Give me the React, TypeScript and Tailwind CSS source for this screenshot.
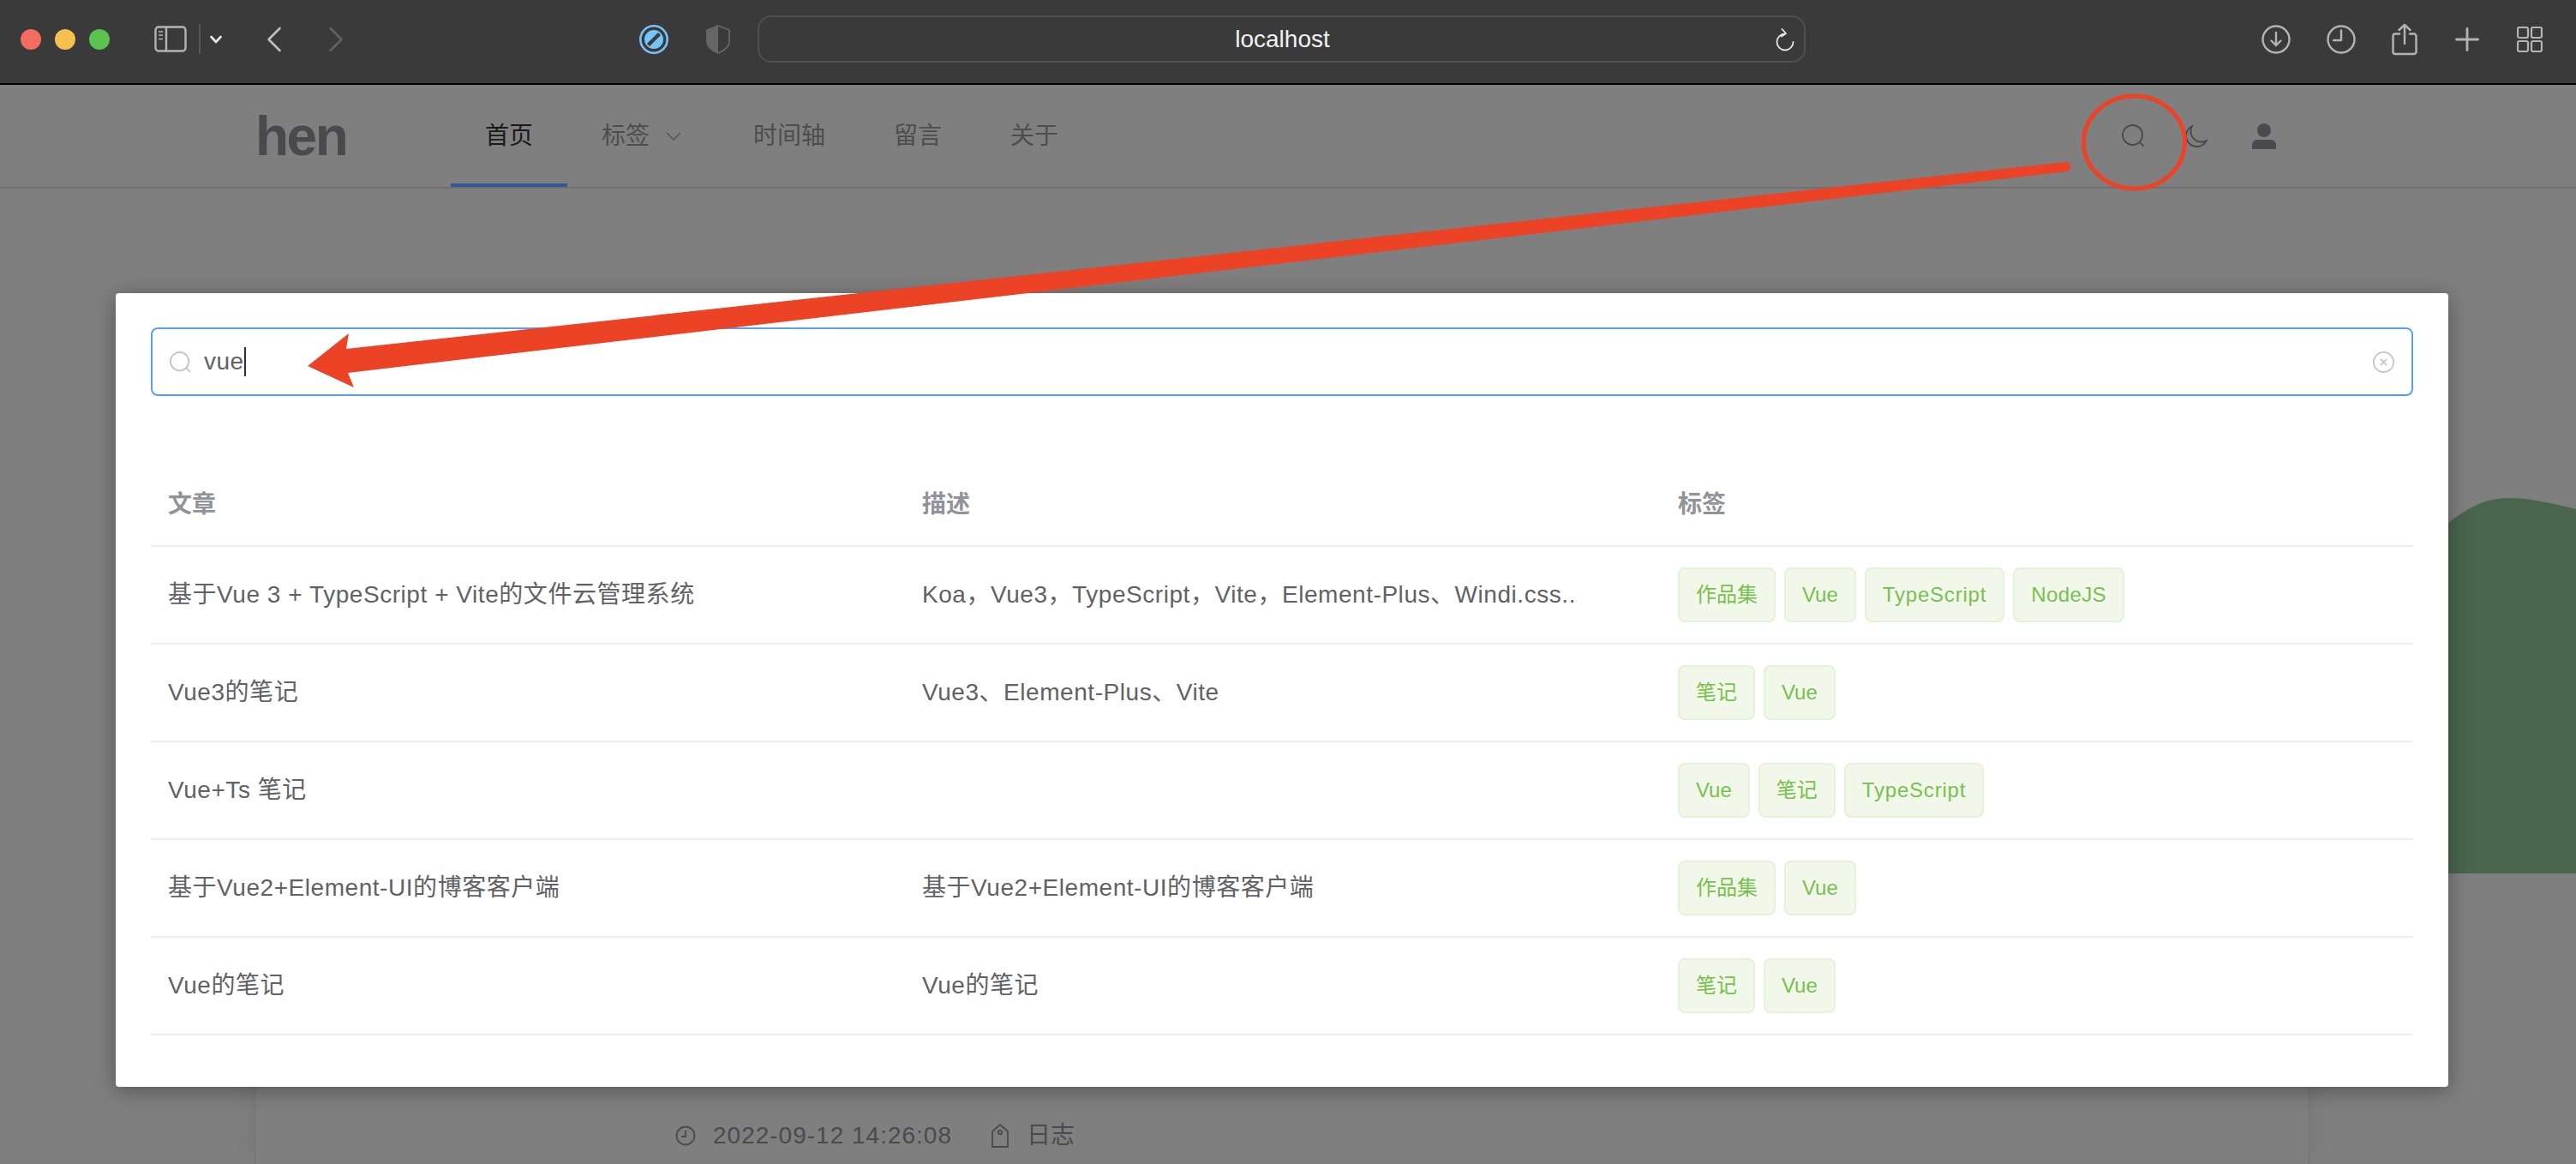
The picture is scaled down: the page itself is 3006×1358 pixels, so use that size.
const rows = [
  {
    title: "基于Vue 3 + TypeScript + Vite的文件云管理系统",
    desc: "Koa，Vue3，TypeScript，Vite，Element-Plus、Windi.css..",
    tags: ["作品集", "Vue", "TypeScript", "NodeJS"],
  },
  { title: "Vue3的笔记", desc: "Vue3、Element-Plus、Vite", tags: ["笔记", "Vue"] },
  { title: "Vue+Ts 笔记", desc: "", tags: ["Vue", "笔记", "TypeScript"] },
  {
    title: "基于Vue2+Element-UI的博客客户端",
    desc: "基于Vue2+Element-UI的博客客户端",
    tags: ["作品集", "Vue"],
  },
  { title: "Vue的笔记", desc: "Vue的笔记", tags: ["笔记", "Vue"] },
];

function SearchIcon({ className }: { className: string }) {
  return (
    <svg viewBox="64 64 896 896" className={className} fill="currentColor">
      <path d="m795.904 750.72 124.992 124.928a32 32 0 0 1-45.248 45.248L750.656 795.904a416 416 0 1 1 45.248-45.248zM480 832a352 352 0 1 0 0-704 352 352 0 0 0 0 704z" />
    </svg>
  );
}

function BrowserBar() {
  return (
    <div className="flex h-[99px] shrink-0 items-center border-b-2 border-black bg-[#3a3a3a] pb-[6px] pl-[24px] text-[#b4b4b4]">
      <div className="flex gap-[16px]">
        <div className="h-[24px] w-[24px] rounded-full bg-[#f26d60]" />
        <div className="h-[24px] w-[24px] rounded-full bg-[#f6c04e]" />
        <div className="h-[24px] w-[24px] rounded-full bg-[#5ac350]" />
      </div>
      <svg viewBox="0 0 38 31" className="ml-[52px] h-[31px] w-[38px]" fill="none" stroke="currentColor" strokeWidth="2.4">
        <rect x="1.5" y="1.5" width="35" height="28" rx="3.5" />
        <path d="M14 1.5v28" />
        <path d="M5 7h5M5 11h5M5 15.500h5" strokeWidth="1.6" />
      </svg>
      <div className="ml-[14px] h-[35px] w-[2px] bg-[#555555]" />
      <svg viewBox="0 0 14 10" className="ml-[11px] h-[10px] w-[14px]" fill="none" stroke="#e8e8e8" strokeWidth="2.6" strokeLinecap="round" strokeLinejoin="round">
        <path d="M1.500 2 7 8l5.500-6" />
      </svg>
      <svg viewBox="0 0 18 30" className="ml-[52px] h-[30px] w-[18px]" fill="none" stroke="#bdbdbd" strokeWidth="2.6" strokeLinecap="round" strokeLinejoin="round">
        <path d="M15.500 2 2.500 15l13 13" />
      </svg>
      <svg viewBox="0 0 18 30" className="ml-[54px] h-[30px] w-[18px]" fill="none" stroke="#616161" strokeWidth="2.6" strokeLinecap="round" strokeLinejoin="round">
        <path d="m2.500 2 13 13-13 13" />
      </svg>
      <svg viewBox="0 0 34 34" className="ml-[345px] h-[34px] w-[34px]">
        <circle cx="17" cy="17" r="15.700" fill="none" stroke="#74c4fb" strokeWidth="2.600" />
        <circle cx="17" cy="17" r="11" fill="#74c4fb" />
        <path d="M10.500 23.500 23.500 10.500" stroke="#3a3a3a" strokeWidth="4.400" />
      </svg>
      <svg viewBox="0 0 28 34" className="ml-[44px] h-[34px] w-[28px]">
        <path d="M14 1 27 6v14c0 6-6 10-13 13C7 30 1 26 1 20V6z" fill="none" stroke="#666666" strokeWidth="1.800" />
        <path d="M14 1 1 6v14c0 6 6 10 13 13z" fill="#666666" />
      </svg>
      <div className="relative ml-[32px] flex h-[55px] w-[1223px] items-center justify-center rounded-[16px] border-2 border-[#4f4f4f] pt-[1px]">
        <span className="ml-[2px] text-[28px] leading-none text-[#f2f2f2]">localhost</span>
        <svg viewBox="0 0 22 28" className="absolute right-[11px] top-[12px] h-[28px] w-[22px]" fill="none" stroke="#e6e6e6" strokeWidth="1.800" strokeLinecap="round" strokeLinejoin="round">
          <path d="M11 7.500a9.500 9.500 0 1 0 9.500 9.500" />
          <path d="M7.500 2 12 7l-5 3.500" />
        </svg>
      </div>
      <svg viewBox="0 0 34 34" className="ml-[532px] h-[34px] w-[34px]" fill="none" stroke="currentColor" strokeWidth="2.400" strokeLinecap="round" strokeLinejoin="round">
        <circle cx="17" cy="17" r="15.500" />
        <path d="M17 9v15M11.500 18.500 17 24l5.500-5.500" />
      </svg>
      <svg viewBox="0 0 34 34" className="ml-[42px] h-[34px] w-[34px]" fill="none" stroke="currentColor" strokeWidth="2.400" strokeLinecap="round" strokeLinejoin="round">
        <circle cx="17" cy="17" r="15.500" />
        <path d="M17 6.500V18H8" />
      </svg>
      <svg viewBox="0 0 30 38" className="ml-[42px] h-[38px] w-[30px]" fill="none" stroke="currentColor" strokeWidth="2.400" strokeLinecap="round" strokeLinejoin="round">
        <path d="M9 12.500H4A2.500 2.500 0 0 0 1.500 15v18.500A2.500 2.500 0 0 0 4 36h22a2.500 2.500 0 0 0 2.500-2.500V15a2.500 2.500 0 0 0-2.500-2.500h-5" />
        <path d="M15 24V2M8.500 8 15 2l6.500 6" />
      </svg>
      <svg viewBox="0 0 28 28" className="ml-[44px] h-[28px] w-[28px]" fill="none" stroke="currentColor" strokeWidth="2.800" strokeLinecap="round">
        <path d="M14 1.500v25M1.500 14h25" />
      </svg>
      <svg viewBox="0 0 30 30" className="ml-[44px] h-[30px] w-[30px]" fill="none" stroke="currentColor" strokeWidth="2.200">
        <rect x="1" y="1" width="12" height="12" rx="2" />
        <rect x="17" y="1" width="12" height="12" rx="2" />
        <rect x="1" y="17" width="12" height="12" rx="2" />
        <rect x="17" y="17" width="12" height="12" rx="2" />
      </svg>
    </div>
  );
}

function SiteNav() {
  return (
    <div className="flex h-[121px] shrink-0 items-center border-b-2 border-[#707070] pl-[298px] pr-[350px] text-[28px] text-[#4d4d4d]">
      <span className="w-[228px] text-[64px] font-bold leading-none tracking-[-2.5px] text-[#4a4a4e]">hen</span>
      <div className="flex h-full">
        <div className="flex items-center px-[40px] text-[#1a1a1a] shadow-[inset_0_-4px_0_#2f5a93]">首页</div>
        <div className="flex items-center pl-[40px] pr-[44px]">
          标签
          <svg viewBox="0 0 18 10" className="ml-[19px] h-[10px] w-[18px]" fill="none" stroke="#555555" strokeWidth="1.500">
            <path d="m1 1 8 8 8-8" />
          </svg>
        </div>
        <div className="flex items-center px-[40px]">时间轴</div>
        <div className="flex items-center px-[40px]">留言</div>
        <div className="flex items-center px-[40px]">关于</div>
      </div>
      <div className="ml-auto flex items-center text-[#4a4a4e]">
        <SearchIcon className="h-[27px] w-[27px]" />
        <svg viewBox="64 64 896 896" className="ml-[47px] h-[27px] w-[27px]" fill="currentColor">
          <path d="M240.448 240.448a384 384 0 1 0 559.424 525.696 448 448 0 0 1-542.016-542.08 390.592 390.592 0 0 0-17.408 16.384zm181.056 362.048a384 384 0 0 0 525.632 16.384A448 448 0 1 1 405.056 76.800a384 384 0 0 0 16.448 525.696z" />
        </svg>
        <svg viewBox="0 0 28 30" className="ml-[51px] h-[30px] w-[28px]" fill="currentColor">
          <circle cx="14" cy="8" r="8" />
          <path d="M0 30v-5a6 6 0 0 1 6-6h16a6 6 0 0 1 6 6v5z" />
        </svg>
      </div>
    </div>
  );
}

function BackgroundCard() {
  return (
    <div className="ml-[297px] mt-[180px] flex w-[2398px] flex-1 flex-col justify-end border-x-2 border-[#77777f] pb-[16px] pl-[489px] text-[28px] leading-[34px] text-[#4a4a4e] shadow-[0_0_24px_rgba(0,0,0,0.08)]">
      <div className="flex items-center">
        <svg viewBox="0 0 24 24" className="h-[24px] w-[24px]" fill="none" stroke="currentColor" strokeWidth="1.800">
          <circle cx="12" cy="12" r="10.500" />
          <path d="M12 6v7H7" />
        </svg>
        <span className="ml-[20px] tracking-[1px]">2022-09-12 14:26:08</span>
        <svg viewBox="0 0 20 28" className="ml-[46px] h-[28px] w-[20px]" fill="none" stroke="currentColor" strokeWidth="1.800">
          <path d="M1 9 10 1l9 8v18H1z" />
          <circle cx="10" cy="10" r="2.200" />
        </svg>
        <span className="ml-[21px]">日志</span>
      </div>
    </div>
  );
}

function SearchDialog() {
  return (
    <div className="absolute left-[135px] top-[342px] h-[926px] w-[2722px] rounded-[4px] bg-white px-[41px] pt-[40px] shadow-[0_4px_24px_rgba(0,0,0,0.35)]">
      <div className="flex h-[80px] items-center rounded-[8px] border-2 border-[#5b9ef6] pl-[20px] pr-[20px] text-[#c0c4cc]">
        <SearchIcon className="h-[25px] w-[25px]" />
        <span className="ml-[15px] text-[28px] tracking-[0.5px] text-[#606266]">vue</span>
        <div className="h-[34px] w-[2px] bg-[#303133]" />
        <svg viewBox="64 64 896 896" className="ml-auto h-[25px] w-[25px]" fill="currentColor">
          <path d="m466.752 512-90.496-90.496a32 32 0 0 1 45.248-45.248L512 466.752l90.496-90.496a32 32 0 1 1 45.248 45.248L557.248 512l90.496 90.496a32 32 0 1 1-45.248 45.248L512 557.248l-90.496 90.496a32 32 0 0 1-45.248-45.248L466.752 512z" />
          <path d="M512 896a384 384 0 1 0 0-768 384 384 0 0 0 0 768zm0 64a448 448 0 1 1 0-896 448 448 0 0 1 0 896z" />
        </svg>
      </div>
      <div className="mt-[76px] grid h-[100px] grid-cols-3 items-center border-b-2 border-[#ebeef5] pt-[3px] text-[28px] font-bold text-[#909399]">
        <div className="px-[20px]">文章</div>
        <div className="px-[20px]">描述</div>
        <div className="pl-[22px]">标签</div>
      </div>
      {rows.map((row) => (
        <div key={row.title} className="grid h-[114px] grid-cols-3 items-center border-b-2 border-[#ebeef5] text-[28px] text-[#606266]">
          <div className="px-[20px] tracking-[0.55px]">{row.title}</div>
          <div className="px-[20px] tracking-[0.55px]">{row.desc}</div>
          <div className="flex gap-[10px] pl-[22px]">
            {row.tags.map((tag) => (
              <span
                key={tag}
                className={
                  "flex h-[64px] items-center rounded-[8px] border-2 border-[#e4f2d9] bg-[#f1f8ea] px-[19px] text-[24px] text-[#78c04e] " +
                  (tag === "TypeScript" ? "tracking-[0.8px]" : tag === "NodeJS" ? "tracking-[0.4px]" : "")
                }
              >
                {tag}
              </span>
            ))}
          </div>
        </div>
      ))}
    </div>
  );
}

export default function App() {
  return (
    <div className="relative flex h-[1358px] w-[3006px] flex-col overflow-hidden bg-[#7f7f7f] font-['Liberation_Sans','Noto_Sans_CJK_SC',sans-serif]">
      <BrowserBar />
      <SiteNav />
      <BackgroundCard />
      <svg viewBox="0 0 149 438" className="absolute left-[2857px] top-[581px] h-[438px] w-[149px]" fill="#4a654e">
        <path d="M0 29C22 12 42 0 72 0c20 0 50 6 77 13v425H0z" />
      </svg>
      <SearchDialog />
      <svg viewBox="0 0 3006 1358" className="pointer-events-none absolute left-0 top-0 h-[1358px] w-[3006px]">
        <ellipse cx="2490.500" cy="166" rx="59" ry="54" fill="none" stroke="#ec4225" strokeWidth="5" />
        <path d="M359 427 407 389 404 407 2411 189C2417 188 2418 199 2412 200L406 435 413 452z" fill="#ec4225" />
      </svg>
    </div>
  );
}
